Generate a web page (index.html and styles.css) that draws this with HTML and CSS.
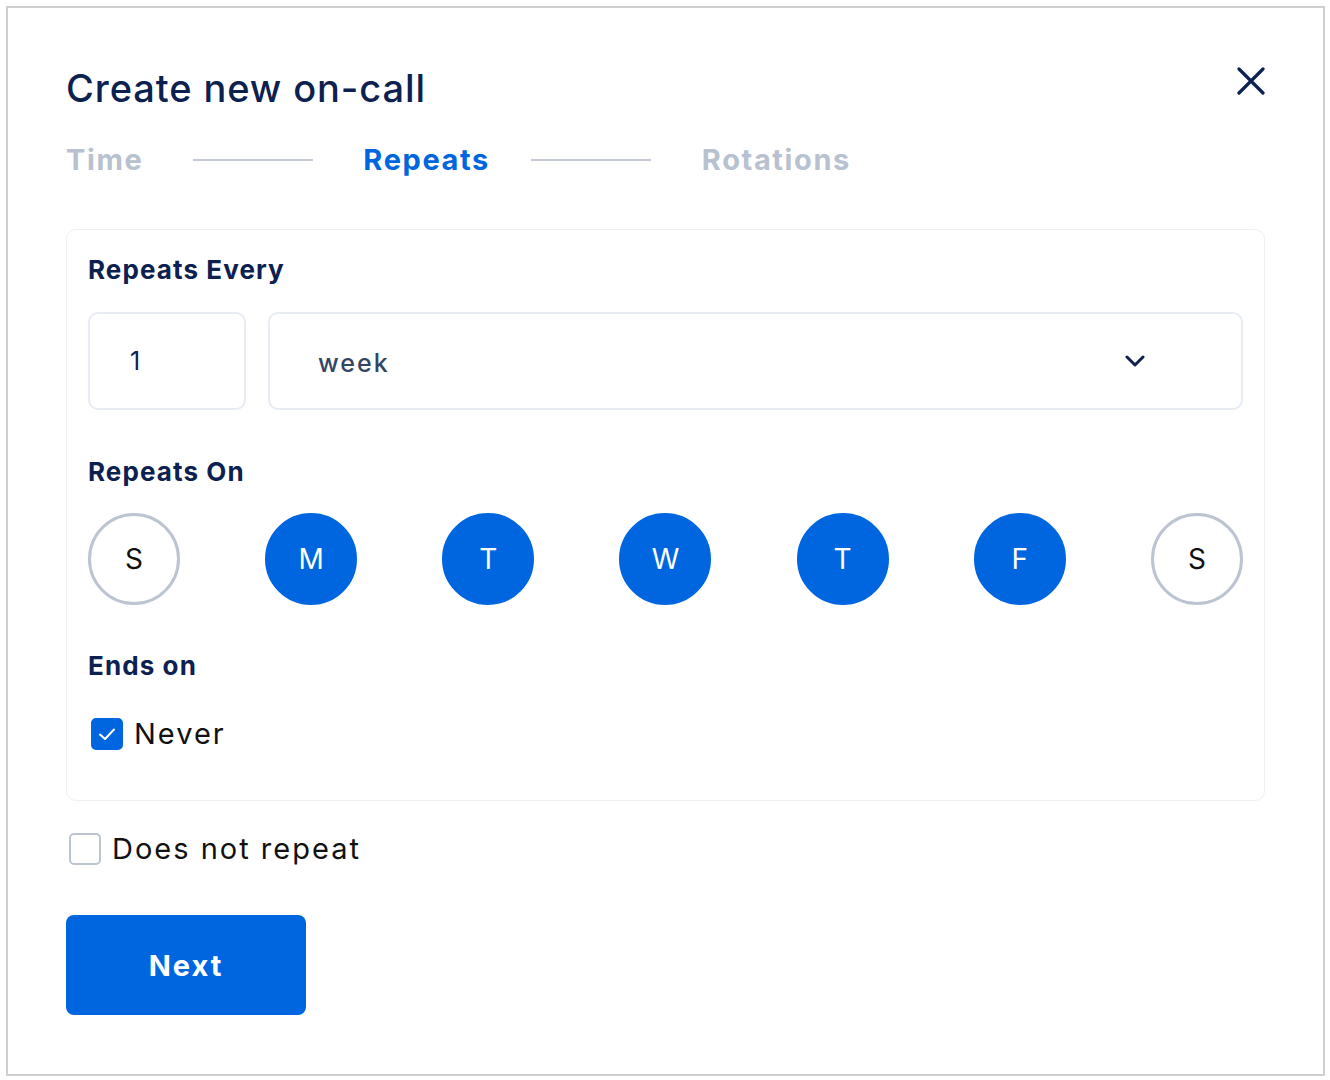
FILE: index.html
```html
<!DOCTYPE html>
<html lang="en">
<head>
<meta charset="utf-8">
<title>Create new on-call</title>
<link rel="stylesheet" href="styles.css">
</head>
<body>
<div class="frame">
  <div class="header">
    <h1 class="title">Create new on-call</h1>
    <button class="close" aria-label="Close">
      <svg width="28" height="28" viewBox="0 0 28 28"><path d="M2 2 L26 26 M26 2 L2 26" stroke="#0c2150" stroke-width="3.2" stroke-linecap="round" fill="none"/></svg>
    </button>
  </div>
  <div class="steps">
    <span class="step">Time</span>
    <span class="step-line"></span>
    <span class="step active">Repeats</span>
    <span class="step-line second"></span>
    <span class="step">Rotations</span>
  </div>
  <div class="card">
    <div class="label">Repeats Every</div>
    <div class="inputs">
      <div class="field num">1</div>
      <div class="field select">
        <span>week</span>
        <svg class="chev" width="20" height="12" viewBox="0 0 20 12"><path d="M2 2 L10 10 L18 2" stroke="#0c2150" stroke-width="3" fill="none" stroke-linecap="round" stroke-linejoin="round"/></svg>
      </div>
    </div>
    <div class="label gap-top">Repeats On</div>
    <div class="days">
      <span class="day">S</span>
      <span class="day on">M</span>
      <span class="day on">T</span>
      <span class="day on">W</span>
      <span class="day on">T</span>
      <span class="day on">F</span>
      <span class="day">S</span>
    </div>
    <div class="label gap-top2">Ends on</div>
    <div class="check-row never">
      <span class="box checked">
        <svg width="20" height="16" viewBox="0 0 20 16"><path d="M3 8.5 L8 13 L17 3.5" stroke="#fff" stroke-width="2" fill="none" stroke-linecap="round" stroke-linejoin="round"/></svg>
      </span>
      <span class="check-text">Never</span>
    </div>
  </div>
  <div class="check-row norepeat">
    <span class="box"></span>
    <span class="check-text">Does not repeat</span>
  </div>
  <button class="next">Next</button>
</div>
</body>
</html>
```

FILE: styles.css
```css
* { box-sizing: border-box; }
html, body { margin: 0; padding: 0; background: #fff; }
body { font-family: Inter, "Noto Sans", sans-serif; color: #0c2150; }
.frame {
  margin: 6px 0 0 6px;
  width: 1319px;
  height: 1070px;
  border: 2px solid #cfcfcf;
  padding: 0 58px 0 58px;
  display: flex;
  flex-direction: column;
  align-items: flex-start;
}
.header {
  width: 100%;
  display: flex;
  justify-content: space-between;
  align-items: center;
  padding-top: 57px;
}
.title {
  margin: 0;
  font-size: 38px;
  line-height: 46px;
  font-weight: 500;
  color: #0c2150;
  letter-spacing: 0.9px;
}
.close {
  border: 0;
  background: none;
  padding: 0;
  margin-right: 0;
  margin-top: -14px;
  width: 28px;
  height: 28px;
  display: flex;
}
.steps {
  display: flex;
  align-items: center;
  margin-top: 31px;
  height: 36px;
}
.step {
  font-size: 29px;
  font-weight: 700;
  color: #b8c1cf;
  line-height: 36px;
  letter-spacing: 1.6px;
}
.step.active { color: #0066e0; }
.step-line {
  width: 120px;
  height: 2px;
  background: #c3c9d5;
  margin: 0 50px;
}
.step-line.second { margin: 0 51px 0 41px; }
.card {
  margin-top: 51px;
  width: 1199px;
  border: 1px solid #eef0f4;
  border-radius: 10px;
  padding: 25px 21px 48px 21px;
  display: flex;
  flex-direction: column;
}
.label {
  font-size: 26px;
  font-weight: 700;
  line-height: 30px;
  color: #0c2150;
  letter-spacing: 1.1px;
}
.gap-top { margin-top: 47px; }
.gap-top2 { margin-top: 46px; }
.inputs {
  display: flex;
  gap: 22px;
  margin-top: 27px;
}
.field {
  height: 98px;
  border: 2px solid #e6ebf4;
  border-radius: 10px;
  display: flex;
  align-items: center;
  font-size: 25px;
}
.num {
  width: 158px;
  padding-left: 40px;
  color: #0c2150;
}
.select {
  flex: 1;
  padding-left: 48px;
  padding-right: 96px;
  justify-content: space-between;
  color: #344563;
  font-weight: 500;
  letter-spacing: 2px;
}
.select span { margin-top: 4px; }
.days {
  display: flex;
  justify-content: space-between;
  margin-top: 26px;
}
.day {
  width: 92px;
  height: 92px;
  border-radius: 50%;
  border: 3px solid #bcc4d1;
  display: flex;
  align-items: center;
  justify-content: center;
  font-size: 28px;
  color: #111;
}
.day.on {
  background: #0066e0;
  border-color: #0066e0;
  color: #fff;
}
.check-row {
  display: flex;
  align-items: center;
  height: 36px;
}
.never { margin-top: 35px; padding-left: 3px; }
.norepeat { margin-top: 30px; padding-left: 3px; }
.box {
  width: 32px;
  height: 32px;
  border-radius: 5px;
  border: 2px solid #bcc4d1;
  display: flex;
  align-items: center;
  justify-content: center;
  background: #fff;
}
.box.checked { background: #0066e0; border-color: #0066e0; }
.check-text {
  font-size: 29px;
  color: #111;
  margin-left: 11px;
  line-height: 36px;
  letter-spacing: 2px;
}
.next {
  margin-top: 48px;
  width: 240px;
  height: 100px;
  border: 0;
  border-radius: 8px;
  background: #0066e0;
  color: #fff;
  font-family: Inter, "Noto Sans", sans-serif;
  font-size: 29px;
  font-weight: 700;
  letter-spacing: 2px;
}
```
